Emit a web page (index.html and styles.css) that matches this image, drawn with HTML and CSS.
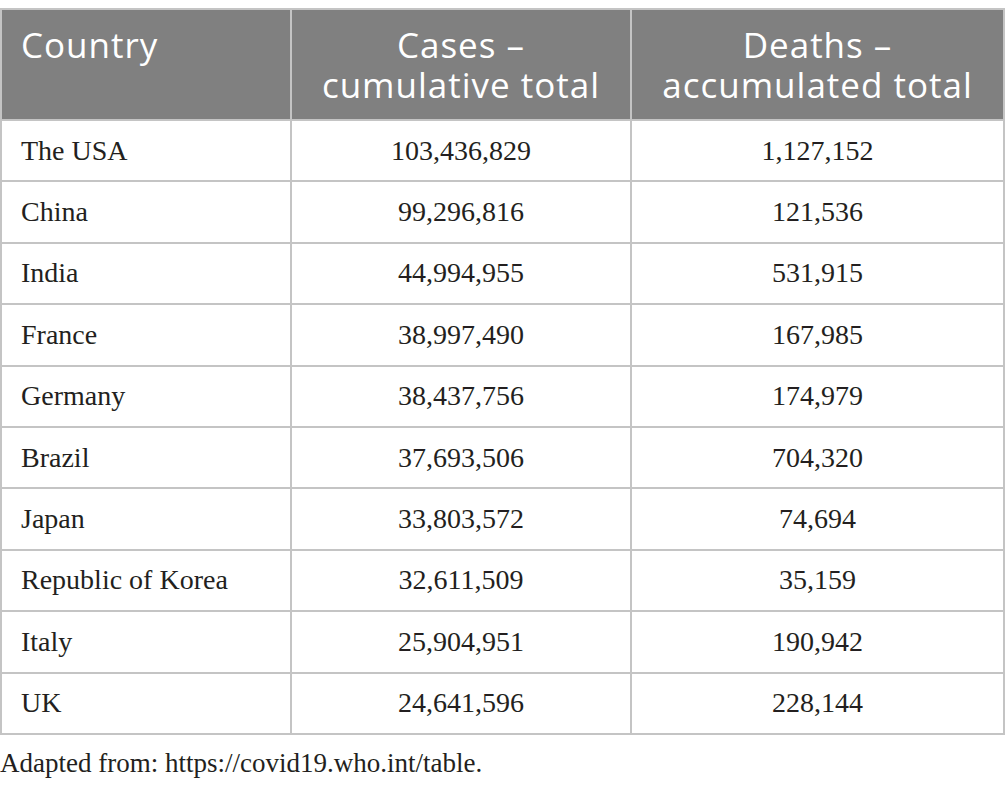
FILE: index.html
```html
<!DOCTYPE html>
<html lang="en">
<head>
    <meta charset="UTF-8">
    <title>COVID-19 cases and deaths by country</title>
    <link rel="stylesheet" href="styles.css">
</head>
<body>

    <table class="data-table">
        <colgroup>
            <col class="col-country">
            <col class="col-cases">
            <col class="col-deaths">
        </colgroup>
        <thead>
            <tr>
                <th class="head-country"><span class="line">Country</span></th>
                <th><span class="line">Cases –</span><span class="line">cumulative total</span></th>
                <th><span class="line">Deaths –</span><span class="line">accumulated total</span></th>
            </tr>
        </thead>
        <tbody>
            <tr><td>The USA</td><td>103,436,829</td><td>1,127,152</td></tr>
            <tr><td>China</td><td>99,296,816</td><td>121,536</td></tr>
            <tr><td>India</td><td>44,994,955</td><td>531,915</td></tr>
            <tr><td>France</td><td>38,997,490</td><td>167,985</td></tr>
            <tr><td>Germany</td><td>38,437,756</td><td>174,979</td></tr>
            <tr><td>Brazil</td><td>37,693,506</td><td>704,320</td></tr>
            <tr><td>Japan</td><td>33,803,572</td><td>74,694</td></tr>
            <tr><td>Republic of Korea</td><td>32,611,509</td><td>35,159</td></tr>
            <tr><td>Italy</td><td>25,904,951</td><td>190,942</td></tr>
            <tr><td>UK</td><td>24,641,596</td><td>228,144</td></tr>
        </tbody>
    </table>

    <p class="source">Adapted from: https://covid19.who.int/table.</p>

</body>
</html>
```

FILE: styles.css
```css
body {
    margin: 0;
    padding-top: 8px;
    background-color: #ffffff;
    color: #231f20;
    font-family: "Liberation Serif", serif;
}

.data-table {
    width: 1005px;
    border-collapse: collapse;
    table-layout: fixed;
}

.col-country { width: 290px; }
.col-cases { width: 340px; }

.data-table th,
.data-table td {
    border: 2px solid #c4c4c4;
}

.data-table th {
    background-color: #808080;
    color: #ffffff;
    font-family: "Open Sans", sans-serif;
    font-weight: normal;
    font-size: 35px;
    letter-spacing: 1px;
    line-height: 40px;
    height: 80px;
    padding: 15px 4px 14px 4px;
    text-align: center;
    vertical-align: top;
}

.data-table th .line {
    display: block;
    height: 40px;
    white-space: nowrap;
}

.data-table th.head-country {
    text-align: left;
    padding-left: 19px;
}

.data-table td {
    height: 59.4px;
    padding: 0 4px;
    font-size: 28px;
    text-align: center;
    vertical-align: middle;
}

.data-table td:first-child {
    text-align: left;
    padding-left: 19px;
}

.source {
    margin: 13px 0 0 0;
    font-size: 27px;
}
```
